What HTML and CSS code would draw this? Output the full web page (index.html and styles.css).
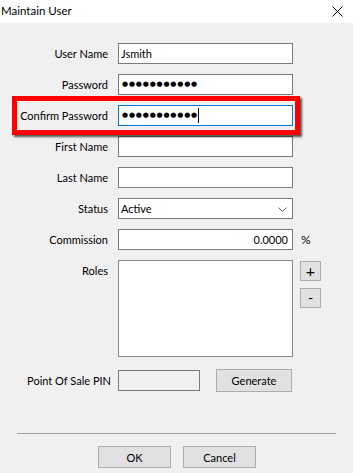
FILE: index.html
```html
<!DOCTYPE html>
<html>
<head>
<meta charset="utf-8">
<link rel="stylesheet" href="styles.css">
</head>
<body>
<div class="window">
  <div class="titlebar">
    <span class="title">Maintain User</span>
    <svg class="close" width="11" height="11" viewBox="0 0 11 11"><path d="M0.5 0.5 L10.5 10.5 M10.5 0.5 L0.5 10.5" stroke="#000" stroke-width="1" fill="none"/></svg>
  </div>
  <div class="content">
    <div class="form">
      <label class="lbl">User Name</label>
      <div class="field"><span class="val">Jsmith</span></div>
      <span></span>

      <label class="lbl">Password</label>
      <div class="field"><span class="dots">●●●●●●●●●●●</span></div>
      <span></span>

      <label class="lbl highlight-row">Confirm Password<span class="highlight"></span></label>
      <div class="field focused"><span class="dots">●●●●●●●●●●●</span><span class="caret"></span></div>
      <span></span>

      <label class="lbl">First Name</label>
      <div class="field"></div>
      <span></span>

      <label class="lbl">Last Name</label>
      <div class="field"></div>
      <span></span>

      <label class="lbl">Status</label>
      <div class="field select"><span class="val">Active</span>
        <svg class="chev" width="9" height="5" viewBox="0 0 9 5"><path d="M0.5 0.5 L4.5 4.5 L8.5 0.5" stroke="#5a5a5a" stroke-width="1" fill="none"/></svg>
      </div>
      <span></span>

      <label class="lbl">Commission</label>
      <div class="field num"><span class="val">0.0000</span></div>
      <span class="pct">%</span>

      <label class="lbl top">Roles</label>
      <div class="listbox"></div>
      <div class="side-btns">
        <button class="btn small plus">+</button>
        <button class="btn small minus">-</button>
      </div>
    </div>

    <div class="pin-row">
      <label class="lbl pin-lbl">Point Of Sale PIN</label>
      <div class="field pin"></div>
      <button class="btn generate">Generate</button>
    </div>

    <div class="sep"></div>

    <div class="actions">
      <button class="btn action">OK</button>
      <button class="btn action">Cancel</button>
    </div>
  </div>
</div>
</body>
</html>
```

FILE: styles.css
```css
* { box-sizing: border-box; }
html, body {
  margin: 0;
  padding: 0;
  background: #f0f0f0;
}
body {
  width: 353px;
  height: 473px;
  overflow: hidden;
  font-family: "Lato", "Noto Sans", sans-serif;
  font-size: 11px;
  color: #000;
}
.window {
  width: 353px;
  height: 473px;
  background: #f0f0f0;
}
.titlebar {
  height: 23px;
  background: #fff;
  display: flex;
  align-items: center;
  justify-content: space-between;
  padding: 0 10px 1px 1px;
}
.title {
  font-size: 11.5px;
  line-height: 16px;
}
.close {
  display: block;
  margin-right: 0;
}
.content {
  padding-top: 20px;
}
.form {
  display: grid;
  grid-template-columns: 118px 182px 1fr;
  grid-template-rows: repeat(7, 21px) 97px;
  row-gap: 10px;
}
.lbl {
  text-align: right;
  padding-right: 10px;
  line-height: 21px;
  white-space: nowrap;
}
.lbl.top {
  line-height: 16px;
  padding-top: 3px;
}
.highlight-row {
  position: relative;
}
.highlight {
  position: absolute;
  left: 12px;
  top: -9px;
  width: 288px;
  height: 39px;
  border: 5px solid #ff0000;
  box-shadow: 2px 2px 2px rgba(0, 0, 0, 0.65);
  pointer-events: none;
}
.field {
  width: 175px;
  height: 21px;
  background: #fff;
  border: 1px solid #7a7a7a;
  display: flex;
  align-items: center;
  padding: 0 4px 0 2px;
  line-height: 19px;
}
.field.focused {
  border-color: #0078d7;
}
.field.num {
  justify-content: flex-end;
}
.field.select {
  justify-content: space-between;
  padding-right: 5px;
}
.chev {
  display: block;
  margin-top: 1px;
}
.dots {
  font-family: "DejaVu Sans", sans-serif;
  font-size: 7px;
  letter-spacing: 0.8px;
  line-height: 19px;
  padding-left: 1px;
}
.caret {
  display: inline-block;
  width: 1px;
  height: 15px;
  background: #000;
  margin-left: 0;
}
.pct {
  line-height: 21px;
  padding-left: 1px;
  font-size: 12px;
}
.listbox {
  height: 97px;
  width: 175px;
  background: #fff;
  border: 1px solid #828790;
}
.side-btns {
  display: flex;
  flex-direction: column;
  gap: 7px;
  padding-top: 1px;
}
.btn {
  font-family: inherit;
  font-size: 11px;
  color: #000;
  background: #e1e1e1;
  border: 1px solid #adadad;
  border-radius: 0;
  padding: 0;
  margin: 0;
}
.btn.small {
  width: 21px;
  height: 20px;
  line-height: 18px;
  font-size: 16px;
}
.btn.minus {
  font-size: 14px;
}
.pin-row {
  display: flex;
  align-items: center;
  margin-top: 12px;
  height: 23px;
}
.pin-lbl {
  width: 118px;
  padding-right: 7px;
}
.field.pin {
  width: 82px;
  background: #f0f0f0;
}
.btn.generate {
  width: 76px;
  height: 23px;
  margin-left: 16px;
}
.sep {
  margin: 41px 17px 0 17px;
  height: 1px;
  background: #a0a0a0;
}
.actions {
  display: flex;
  justify-content: center;
  gap: 12px;
  margin-top: 12px;
  padding-left: 1px;
}
.btn.action {
  width: 73px;
  height: 22px;
}
```
